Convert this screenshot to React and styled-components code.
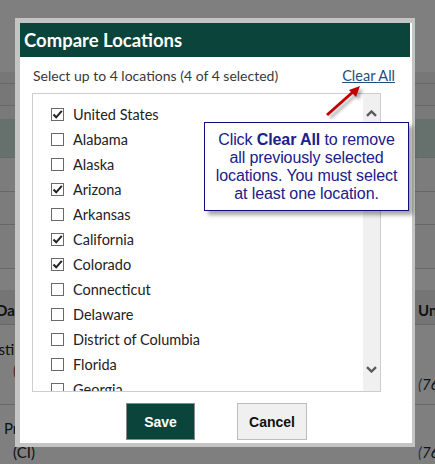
import styled, { createGlobalStyle } from 'styled-components'

const GlobalStyle = createGlobalStyle`
  html, body { margin: 0; padding: 0; background: #fff; }
  * { box-sizing: border-box; }
`

const Screen = styled.div`
  position: relative;
  width: 435px;
  height: 464px;
  overflow: hidden;
  font-family: Lato, "Open Sans", sans-serif;
`

// the page that sits behind the dialog
const Page = styled.div`
  display: flex;
  flex-direction: column;
  padding-top: 72px;
  background: #fff;
  height: 100%;
`

const PageRow = styled.div`
  display: flex;
  justify-content: space-between;
  height: ${p => p.h}px;
  border-bottom: ${p => (p.line ? '1px solid #cfcfcf' : 'none')};
  background: ${p => p.bg || 'transparent'};
  font-size: 15px;
  color: #222;
`

const Cell = styled.div`
  width: ${p => p.w || 15}px;
  padding-top: ${p => p.pt || 0}px;
  margin-left: ${p => p.ml || 0}px;
  font-weight: ${p => (p.bold ? 700 : 400)};
  white-space: nowrap;
  overflow: visible;
  line-height: ${p => p.lh || 22}px;
`

const Italic = styled.span`
  font-style: italic;
  color: ${p => p.c || '#222'};
`

const Indent = styled.span`
  padding-left: ${p => p.w}px;
`

const Backdrop = styled.div`
  position: absolute;
  inset: 0;
  background: rgba(0, 0, 0, 0.5);
`

const Dialog = styled.div`
  position: absolute;
  left: 15px;
  top: 18px;
  width: 400px;
  height: 429px;
  border-style: solid;
  border-color: #c4c4c4;
  border-width: 5px 3px 4px 5px;
  background: #fff;
  display: flex;
  flex-direction: column;
`

const Header = styled.div`
  height: 34px;
  margin-right: 2px;
  background: #0a443a;
  color: #fff;
  font-weight: 700;
  font-size: 18.5px;
  line-height: 34px;
  padding-left: 4px;
`

const SubRow = styled.div`
  display: flex;
  justify-content: space-between;
  align-items: center;
  margin: 9px 17px 0 13px;
  height: 18px;
  font-size: 14px;
  color: #3a3a3a;
`

const ClearLink = styled.a`
  color: #1d4f7c;
  font-size: 14.5px;
  text-decoration: underline;
  cursor: pointer;
`

const ListBox = styled.div`
  margin: 9px 0 0 12px;
  width: 349px;
  height: 299px;
  border: 1px solid #cdcdcd;
  display: flex;
  overflow: hidden;
`

const List = styled.ul`
  flex: 1;
  list-style: none;
  margin: 0;
  padding: 8px 0 0 18px;
`

const Item = styled.li`
  display: flex;
  align-items: center;
  height: 25px;
  font-size: 14.5px;
  color: #222;
`

const Box = styled.span`
  width: 13px;
  height: 13px;
  border: 1px solid #6a6a6a;
  background: #fff;
  margin-right: 9px;
  display: flex;
  align-items: center;
  justify-content: center;
`

const Track = styled.div`
  width: 17px;
  background: #f0f0f0;
  display: flex;
  flex-direction: column;
  justify-content: space-between;
  align-items: center;
  padding: 16px 0 18px;
`

const ButtonRow = styled.div`
  display: flex;
  justify-content: center;
  gap: 42px;
  margin-top: 11px;
  padding-left: 1px;
`

const Button = styled.button`
  width: ${p => p.w}px;
  height: 37px;
  font-family: "Liberation Sans", Arial, sans-serif;
  font-weight: 700;
  font-size: 14px;
  border: 1px solid ${p => (p.primary ? '#8a8a8a' : '#bdbdbd')};
  background: ${p => (p.primary ? '#0a443a' : '#f0f0f0')};
  color: ${p => (p.primary ? '#fff' : '#111')};
  cursor: pointer;
`

const Callout = styled.div`
  position: absolute;
  left: 204px;
  top: 122px;
  width: 205px;
  height: 89px;
  border: 1px solid #10107a;
  background: #fff;
  box-shadow: 4px 4px 4px rgba(0, 0, 0, 0.35);
  font-family: "Liberation Sans", Arial, sans-serif;
  font-size: 16px;
  line-height: 18px;
  color: #20208a;
  text-align: center;
  padding: 8px 2px 0;
  letter-spacing: -0.1px;
`

const Arrow = styled.svg`
  position: absolute;
  left: 318px;
  top: 80px;
`

const locations = [
  ['United States', true],
  ['Alabama', false],
  ['Alaska', false],
  ['Arizona', true],
  ['Arkansas', false],
  ['California', true],
  ['Colorado', true],
  ['Connecticut', false],
  ['Delaware', false],
  ['District of Columbia', false],
  ['Florida', false],
  ['Georgia', false],
]

const Check = () => (
  <svg width="11" height="11" viewBox="0 0 11 11">
    <path d="M1.5 5.5 L4.2 8.3 L9.8 1.8" fill="none" stroke="#222" strokeWidth="2" />
  </svg>
)

const Chevron = ({ down }) => (
  <svg width="11" height="7" viewBox="0 0 11 7">
    <path
      d={down ? 'M1 1.2 L5.5 5.5 L10 1.2' : 'M1 5.8 L5.5 1.5 L10 5.8'}
      fill="none"
      stroke="#5a5a5a"
      strokeWidth="2.4"
    />
  </svg>
)

const App = () => (
  <Screen>
    <GlobalStyle />
    <Page>
      <PageRow h={12} line bg="#eeeeee"><Cell /><Cell w={15} /></PageRow>
      <PageRow h={23} line bg="#eeeeee"><Cell /><Cell w={15} /></PageRow>
      <PageRow h={13} bg="#f2f2f2"><Cell /><Cell w={15} /></PageRow>
      <PageRow h={40} line bg="#cde0d9"><Cell /><Cell w={15} /></PageRow>
      <PageRow h={35} line bg="#f8f8f8"><Cell /><Cell /></PageRow>
      <PageRow h={34} line bg="#f8f8f8"><Cell /><Cell /></PageRow>
      <PageRow h={45} line bg="#f8f8f8"><Cell /><Cell /></PageRow>
      <PageRow h={21} bg="#fff"><Cell /><Cell /></PageRow>
      <PageRow h={36} line bg="#ebebeb">
        <Cell bold pt={9} ml={-4} w={19}>Data</Cell>
        <Cell bold pt={9} w={17}>Unit</Cell>
      </PageRow>
      <PageRow h={82} line bg="#fff">
        <Cell pt={14} ml={-10} w={25} lh={20}>
          Estimate
          <br />
          <Indent w={23}>
            <Italic c="#b25a00">(</Italic>
          </Indent>
        </Cell>
        <Cell pt={48} w={17}>
          <Italic c="#4a6a8a">(</Italic>
          <Italic>76</Italic>
        </Cell>
      </PageRow>
      <PageRow h={60} bg="#fff">
        <Cell pt={11} ml={4} lh={24}>
          Pr
          <br />
          <Indent w={9}>(CI)</Indent>
        </Cell>
        <Cell pt={36} w={17}>
          <Italic c="#4a6a8a">(</Italic>
          <Italic>76</Italic>
        </Cell>
      </PageRow>
    </Page>
    <Backdrop />
    <Dialog>
      <Header>Compare Locations</Header>
      <SubRow>
        <span>Select up to 4 locations (4 of 4 selected)</span>
        <ClearLink>Clear All</ClearLink>
      </SubRow>
      <ListBox>
        <List>
          {locations.map(([name, checked]) => (
            <Item key={name}>
              <Box>{checked && <Check />}</Box>
              {name}
            </Item>
          ))}
        </List>
        <Track>
          <Chevron />
          <Chevron down />
        </Track>
      </ListBox>
      <ButtonRow>
        <Button primary w={69}>Save</Button>
        <Button w={70}>Cancel</Button>
      </ButtonRow>
    </Dialog>
    <Arrow width="50" height="44" viewBox="0 0 50 44">
      <defs>
        <filter id="blur" x="-20%" y="-20%" width="140%" height="140%">
          <feGaussianBlur stdDeviation="1.5" />
        </filter>
      </defs>
      <g opacity="0.45" filter="url(#blur)" transform="translate(3 3)">
        <path d="M9 35 L36 11" stroke="#555" strokeWidth="3" />
        <path d="M42 6 L31 10 L38 17 Z" fill="#555" />
      </g>
      <path d="M9 35 L36 11" stroke="#c00000" strokeWidth="3" />
      <path d="M42 6 L31 10 L38 17 Z" fill="#c00000" />
    </Arrow>
    <Callout>
      Click <b>Clear All</b> to remove
      <br />
      all previously selected
      <br />
      locations. You must select
      <br />
      at least one location.
    </Callout>
  </Screen>
)

export default App
